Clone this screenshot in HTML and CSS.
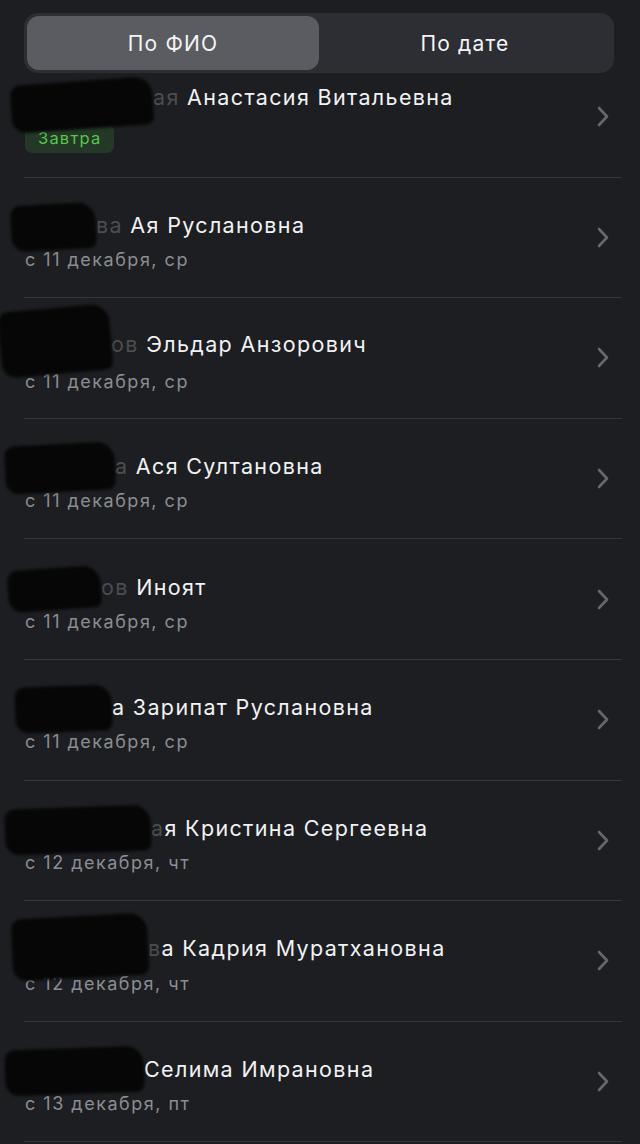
FILE: index.html
```html
<!DOCTYPE html>
<html lang="ru">
<head>
<meta charset="utf-8">
<title>Список</title>
<link rel="stylesheet" href="styles.css">
</head>
<body>
<div class="screen">
  <header class="header">
    <div class="segmented">
      <div class="seg active">По ФИО</div>
      <div class="seg">По дате</div>
    </div>
  </header>
  <ul class="list">
    <li class="row">
      <div class="info first">
        <div class="name"><span class="redact r1"></span><span class="dim">ая</span> Анастасия Витальевна</div>
        <span class="badge">Завтра</span>
      </div>
      <svg class="chev" viewBox="0 0 12 21" width="12" height="21"><path d="M2 2 L10 10.5 L2 19"/></svg>
    </li>
    <li class="row">
      <div class="info">
        <div class="name"><span class="redact r2"></span><span class="dim">ва</span> Ая Руслановна</div>
        <div class="sub">с 11 декабря, ср</div>
      </div>
      <svg class="chev" viewBox="0 0 12 21" width="12" height="21"><path d="M2 2 L10 10.5 L2 19"/></svg>
    </li>
    <li class="row">
      <div class="info">
        <div class="name"><span class="redact r3"></span><span class="dim">ов</span> Эльдар Анзорович</div>
        <div class="sub">с 11 декабря, ср</div>
      </div>
      <svg class="chev" viewBox="0 0 12 21" width="12" height="21"><path d="M2 2 L10 10.5 L2 19"/></svg>
    </li>
    <li class="row">
      <div class="info">
        <div class="name"><span class="redact r4"></span><span class="dim">а</span> Ася Султановна</div>
        <div class="sub">с 11 декабря, ср</div>
      </div>
      <svg class="chev" viewBox="0 0 12 21" width="12" height="21"><path d="M2 2 L10 10.5 L2 19"/></svg>
    </li>
    <li class="row">
      <div class="info">
        <div class="name"><span class="redact r5"></span><span class="dim">ов</span> Иноят</div>
        <div class="sub">с 11 декабря, ср</div>
      </div>
      <svg class="chev" viewBox="0 0 12 21" width="12" height="21"><path d="M2 2 L10 10.5 L2 19"/></svg>
    </li>
    <li class="row">
      <div class="info">
        <div class="name"><span class="redact r6"></span>а Зарипат Руслановна</div>
        <div class="sub">с 11 декабря, ср</div>
      </div>
      <svg class="chev" viewBox="0 0 12 21" width="12" height="21"><path d="M2 2 L10 10.5 L2 19"/></svg>
    </li>
    <li class="row">
      <div class="info">
        <div class="name"><span class="redact r7"></span><span class="dim">а</span>я Кристина Сергеевна</div>
        <div class="sub">с 12 декабря, чт</div>
      </div>
      <svg class="chev" viewBox="0 0 12 21" width="12" height="21"><path d="M2 2 L10 10.5 L2 19"/></svg>
    </li>
    <li class="row">
      <div class="info">
        <div class="name"><span class="redact r8"></span><span class="dim">в</span>а Кадрия Муратхановна</div>
        <div class="sub">с 12 декабря, чт</div>
      </div>
      <svg class="chev" viewBox="0 0 12 21" width="12" height="21"><path d="M2 2 L10 10.5 L2 19"/></svg>
    </li>
    <li class="row">
      <div class="info">
        <div class="name"><span class="redact r9"></span>Селима Имрановна</div>
        <div class="sub">с 13 декабря, пт</div>
      </div>
      <svg class="chev" viewBox="0 0 12 21" width="12" height="21"><path d="M2 2 L10 10.5 L2 19"/></svg>
    </li>
  </ul>
</div>
</body>
</html>
```
FILE: styles.css
```css
html, body {
  margin: 0;
  padding: 0;
  background: #1c1e21;
}
body {
  font-family: Inter, "Noto Sans", "Liberation Sans", sans-serif;
  color: #f2f2f4;
  width: 640px;
  height: 1144px;
  overflow: hidden;
}
.screen {
  display: flex;
  flex-direction: column;
}
.header {
  position: relative;
  z-index: 2;
  background: #1c1e21;
  padding: 13px 26px 0 24px;
  height: 60px;
}
.segmented {
  display: flex;
  height: 60px;
  box-sizing: border-box;
  padding: 3px;
  border-radius: 14px;
  background: #2c2e33;
}
.seg {
  flex: 1;
  display: flex;
  align-items: center;
  justify-content: center;
  font-size: 21px;
  letter-spacing: 1.2px;
  color: #f4f4f6;
  border-radius: 12px;
}
.seg.active {
  background: #5a5c61;
}
.list {
  list-style: none;
  margin: -16px 0 0 0;
  padding: 0;
  position: relative;
  z-index: 1;
}
.row {
  height: 120.6px;
  box-sizing: border-box;
  display: flex;
  align-items: center;
  justify-content: space-between;
  margin: 0 18px 0 24px;
  padding: 0 13px 0 1px;
  border-bottom: 1px solid #35373b;
}
.info {
  display: flex;
  flex-direction: column;
  align-items: flex-start;
  margin-top: 9px;
}
.info.first {
  margin-top: 3px;
}
.name {
  font-size: 21.5px;
  letter-spacing: 1.35px;
  line-height: 26px;
  white-space: nowrap;
}
.dim {
  color: #4b4d52;
}
.sub {
  margin-top: 10px;
  font-size: 18px;
  letter-spacing: 1.5px;
  line-height: 24px;
  color: #8b8d92;
}
.badge {
  margin-top: 14px;
  height: 29px;
  box-sizing: border-box;
  padding: 0 13px;
  display: inline-flex;
  align-items: center;
  border-radius: 7px;
  background: #233826;
  color: #58c54c;
  font-size: 16.5px;
  letter-spacing: 1.2px;
}
.chev {
  flex: none;
  fill: none;
  stroke: #66686d;
  stroke-width: 2.6;
  stroke-linecap: round;
  stroke-linejoin: round;
}
.redact {
  display: inline-block;
  vertical-align: middle;
  background: #060607;
  border-radius: 10px 18px 8px 14px;
  filter: blur(1.5px);
  margin-top: -20px;
  margin-bottom: -20px;
}
.r1 { width: 142px; height: 48px; margin-left: -14px; transform: translateY(6px) rotate(-4deg); }
.r2 { width: 85px; height: 46px; margin-left: -14px; transform: rotate(-3deg); }
.r3 { width: 111px; height: 66px; margin-left: -25px; transform: translateY(-6px) rotate(-5deg); }
.r4 { width: 110px; height: 48px; margin-left: -20px; transform: rotate(-3deg); }
.r5 { width: 93px; height: 42px; margin-left: -17px; transform: rotate(-4deg); }
.r6 { width: 97px; height: 46px; margin-left: -10px; transform: rotate(-2deg); }
.r7 { width: 146px; height: 46px; margin-left: -20px; transform: rotate(-2deg); }
.r8 { width: 136px; height: 62px; margin-left: -13px; transform: translateY(-4px) rotate(-3deg); }
.r9 { width: 139px; height: 46px; margin-left: -20px; transform: rotate(-2deg); }
```
